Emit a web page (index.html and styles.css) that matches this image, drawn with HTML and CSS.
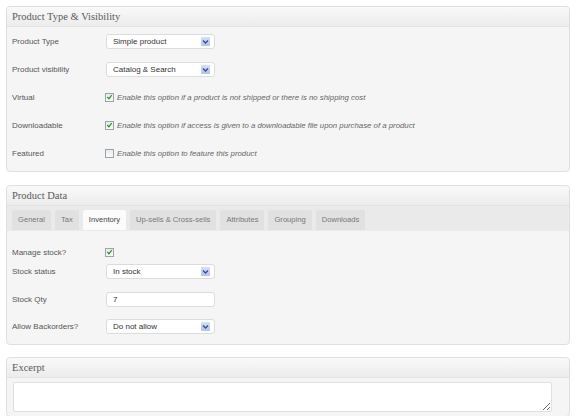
FILE: index.html
```html
<!DOCTYPE html>
<html>
<head>
<meta charset="utf-8">
<link rel="stylesheet" href="styles.css">
</head>
<body>
<div class="panel p1">
  <div class="phead">Product Type &amp; Visibility</div>
  <div class="pbody">
    <div class="row">
      <span class="lbl">Product Type</span>
      <span class="select">Simple product<span class="arrow"><svg width="9" height="9" viewBox="0 0 9 9"><path d="M2 3.5 L4.5 6 L7 3.5" fill="none" stroke="#2f4f9a" stroke-width="1.4"/></svg></span></span>
    </div>
    <div class="row">
      <span class="lbl">Product visibility</span>
      <span class="select">Catalog &amp; Search<span class="arrow"><svg width="9" height="9" viewBox="0 0 9 9"><path d="M2 3.5 L4.5 6 L7 3.5" fill="none" stroke="#2f4f9a" stroke-width="1.4"/></svg></span></span>
    </div>
    <div class="row">
      <span class="lbl">Virtual</span>
      <span class="cb on"><svg width="8" height="8" viewBox="0 0 8 8"><path d="M1.5 4 L3.3 6 L6.5 1.8" fill="none" stroke="#2d8a2d" stroke-width="1.3"/></svg></span>
      <span class="desc">Enable this option if a product is not shipped or there is no shipping cost</span>
    </div>
    <div class="row">
      <span class="lbl">Downloadable</span>
      <span class="cb on"><svg width="8" height="8" viewBox="0 0 8 8"><path d="M1.5 4 L3.3 6 L6.5 1.8" fill="none" stroke="#2d8a2d" stroke-width="1.3"/></svg></span>
      <span class="desc">Enable this option if access is given to a downloadable file upon purchase of a product</span>
    </div>
    <div class="row">
      <span class="lbl">Featured</span>
      <span class="cb"></span>
      <span class="desc">Enable this option to feature this product</span>
    </div>
  </div>
</div>

<div class="panel p2">
  <div class="phead">Product Data</div>
  <div class="tabs">
    <span class="tab">General</span>
    <span class="tab">Tax</span>
    <span class="tab active">Inventory</span>
    <span class="tab">Up-sells &amp; Cross-sells</span>
    <span class="tab">Attributes</span>
    <span class="tab">Grouping</span>
    <span class="tab">Downloads</span>
  </div>
  <div class="pbody2">
    <div class="row manage">
      <span class="lbl">Manage stock?</span>
      <span class="cb on"><svg width="8" height="8" viewBox="0 0 8 8"><path d="M1.5 4 L3.3 6 L6.5 1.8" fill="none" stroke="#2d8a2d" stroke-width="1.3"/></svg></span>
    </div>
    <div class="row r2">
      <span class="lbl">Stock status</span>
      <span class="select">In stock<span class="arrow"><svg width="9" height="9" viewBox="0 0 9 9"><path d="M2 3.5 L4.5 6 L7 3.5" fill="none" stroke="#2f4f9a" stroke-width="1.4"/></svg></span></span>
    </div>
    <div class="row r2">
      <span class="lbl">Stock Qty</span>
      <span class="input">7</span>
    </div>
    <div class="row r2">
      <span class="lbl">Allow Backorders?</span>
      <span class="select">Do not allow<span class="arrow"><svg width="9" height="9" viewBox="0 0 9 9"><path d="M2 3.5 L4.5 6 L7 3.5" fill="none" stroke="#2f4f9a" stroke-width="1.4"/></svg></span></span>
    </div>
  </div>
</div>

<div class="panel p3">
  <div class="phead">Excerpt</div>
  <div class="pbody3">
    <textarea class="ta"></textarea>
  </div>
</div>
</body>
</html>
```
FILE: styles.css
```css
html, body {
  margin: 0;
  padding: 0;
  background: #fff;
  overflow: hidden;
}
body {
  box-sizing: border-box;
  padding: 6px 5px 0 6px;
  font-family: "Liberation Sans", Arial, sans-serif;
  font-size: 8px;
  color: #555;
  height: 416px;
}
.panel {
  border: 1px solid #dfdfdf;
  border-radius: 4px;
  background: #f5f5f5;
  box-sizing: border-box;
}
.p1 { height: 166px; }
.p2 { margin-top: 13px; height: 160px; }
.p3 { margin-top: 12px; height: 60px; }
.phead {
  height: 19px;
  line-height: 19px;
  padding-left: 5px;
  border-bottom: 1px solid #e2e2e2;
  background: linear-gradient(#f9f9f9, #ececec);
  font-family: "Liberation Serif", "Times New Roman", serif;
  font-weight: normal;
  font-size: 10.5px;
  color: #5a5a5a;
  border-radius: 4px 4px 0 0;
}
.row {
  display: flex;
  align-items: center;
  height: 28px;
  padding-left: 5px;
}
.row.r2 { height: 27.5px; }
.lbl {
  width: 94px;
  flex: none;
  color: #555;
}
.select, .input {
  position: relative;
  display: flex;
  align-items: center;
  box-sizing: border-box;
  width: 109px;
  height: 15px;
  border: 1px solid #dcdcdc;
  border-radius: 3px;
  background: #fff;
  padding-left: 6px;
  color: #333;
  font-size: 8px;
}
.arrow {
  position: absolute;
  right: 4px;
  top: 2px;
  width: 9px;
  height: 9px;
  background: linear-gradient(#d7e0f5, #b3c1e6);
  border-radius: 1px;
  display: flex;
}
.cb {
  flex: none;
  box-sizing: border-box;
  width: 9px;
  height: 9px;
  border: 1px solid #9aa3ad;
  background: linear-gradient(#e9ece9, #fafafa);
  display: flex;
  align-items: center;
  justify-content: center;
  margin-left: -1px;
}
.cb svg { display: block; }
.desc {
  margin-left: 3px;
  font-style: italic;
  font-size: 7.8px;
  color: #666;
}
.tabs {
  display: flex;
  align-items: flex-end;
  height: 24px;
  background: #eaeaea;
  padding-left: 5px;
  gap: 4px;
  border-bottom: 1px solid #eaeaea;
}
.tab {
  height: 20px;
  line-height: 20px;
  padding: 0 6px;
  font-size: 7.6px;
  background: #e1e1e1;
  color: #777;
  border-radius: 2px 2px 0 0;
}
.tab.active {
  background: #fbfbfb;
  color: #444;
}
.row.manage {
  height: 12px;
  padding-top: 15px;
}
.pbody3 { padding: 4px 17px 0 6px; }
.ta {
  display: block;
  width: 100%;
  height: 30px;
  box-sizing: border-box;
  border: 1px solid #dfdfdf;
  border-radius: 2px;
  background: #fff;
  margin: 0;
}
```
